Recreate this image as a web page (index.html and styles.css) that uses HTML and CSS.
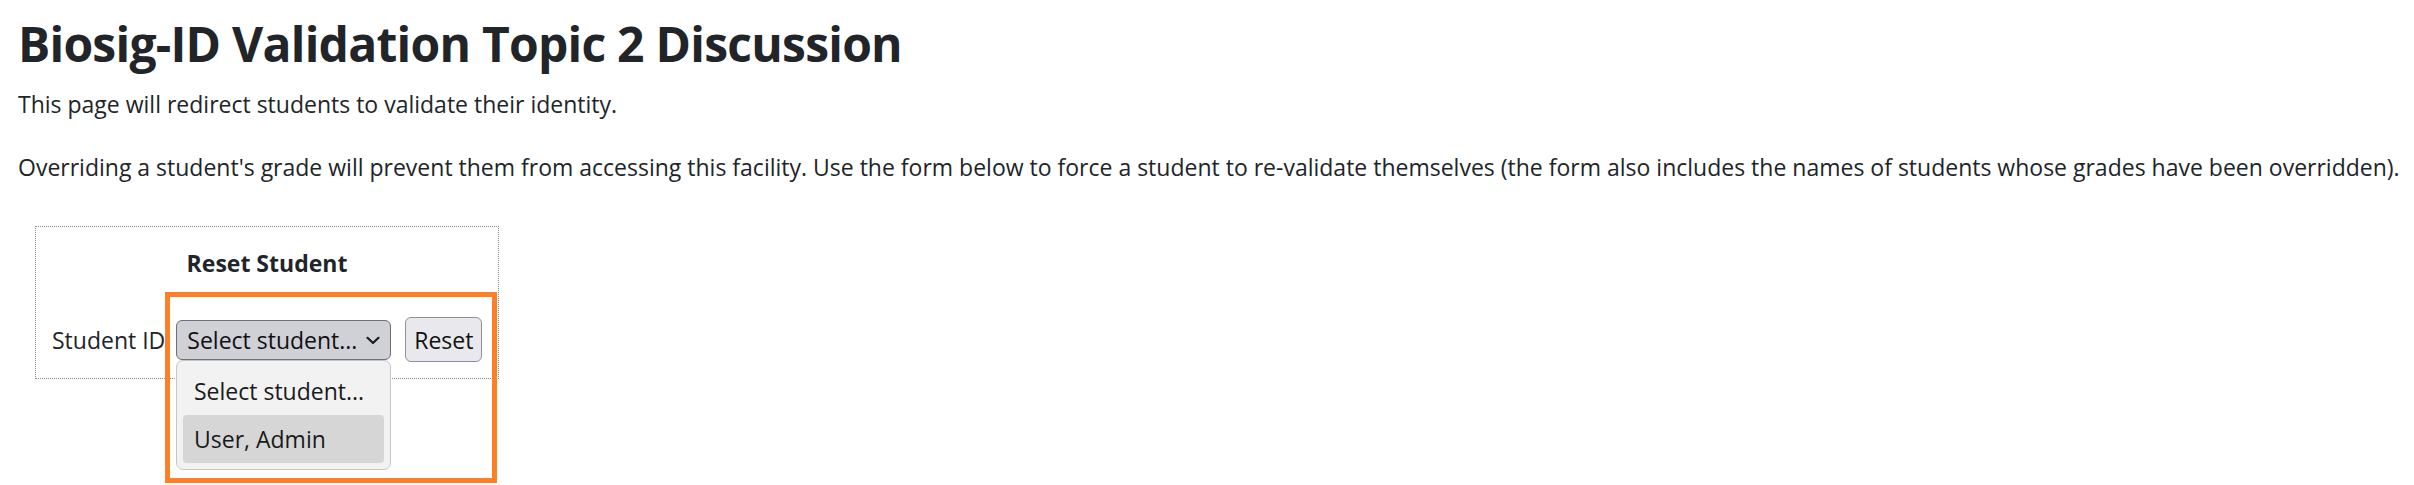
FILE: index.html
```html
<!DOCTYPE html>
<html lang="en">
<head>
  <meta charset="UTF-8" />
  <title>Biosig-ID Validation Topic 2 Discussion</title>
  <link rel="stylesheet" href="styles.css">
</head>
<body>
  <div class="page">
    <h1 class="title">Biosig-ID Validation Topic 2 Discussion</h1>
    <p class="intro">This page will redirect students to validate their identity.</p>
    <p class="intro spaced">Overriding a student's grade will prevent them from accessing this facility. Use the form below to force a student to re-validate themselves (the form also includes the names of students whose grades have been overridden).</p>

    <!-- Reset form -->
    <div class="reset-wrap">
      <div class="reset-box">
        <div class="reset-title">Reset Student</div>
        <div class="reset-row">
          <label class="reset-label">Student ID</label>
          <div class="select-box">
            <span>Select student...</span>
            <svg width="14" height="9" viewBox="0 0 14 9"><path d="M1.5 1.8 L7 7 L12.5 1.8" fill="none" stroke="#1c1c1c" stroke-width="2.2" stroke-linecap="round" stroke-linejoin="round"/></svg>
          </div>
          <button class="reset-btn">Reset</button>
        </div>
      </div>

      <!-- open dropdown -->
      <ul class="select-menu">
        <li class="menu-option">Select student...</li>
        <li class="menu-option active">User, Admin</li>
      </ul>

      <div class="highlight"></div>
    </div>
  </div>
</body>
</html>
```

FILE: styles.css
```css
html, body {
  height: 100%;
}

body {
  margin: 0;
  font-family: 'Open Sans', 'Noto Sans', sans-serif;
  font-size: 23px;
  color: #212529;
  background: #fff;
}

.page {
  min-height: 100%;
  padding: 0 8px 0 18px;
  box-sizing: border-box;
}

.title {
  font-size: 48px;
  font-weight: 700;
  line-height: 58px;
  letter-spacing: -0.75px;
  margin: 0 0 15px;
  padding-top: 15px;
}

.intro {
  line-height: 33px;
  margin: 0;
}

.intro.spaced {
  margin-top: 30px;
}

.reset-wrap {
  position: relative;
  margin: 42px 0 0 17px;
  width: 464px;
}

.reset-box {
  border: 1px dotted #8a8a8a;
  padding: 20px 16px 16px;
}

.reset-title {
  font-weight: 700;
  line-height: 33px;
  text-align: center;
  margin-bottom: 37px;
}

.reset-row {
  display: flex;
  align-items: center;
}

.reset-label {
  flex-shrink: 0;
  white-space: nowrap;
  margin-right: 11px;
}

.select-box {
  box-sizing: border-box;
  flex-shrink: 0;
  width: 215px;
  height: 40px;
  padding: 1px 10px 0;
  display: flex;
  align-items: center;
  justify-content: space-between;
  background: #d0d0d7;
  border: 1px solid #6f6f76;
  border-radius: 6px;
  color: #111;
  white-space: nowrap;
}

.reset-btn {
  box-sizing: border-box;
  flex-shrink: 0;
  width: 77px;
  height: 45px;
  margin-left: 14px;
  padding: 0;
  font-family: inherit;
  font-size: 23px;
  color: #111;
  background: #e9e9ed;
  border: 1px solid #8f8f9d;
  border-radius: 6px;
}

.select-menu {
  position: absolute;
  left: 141px;
  top: 134px;
  z-index: 1;
  box-sizing: border-box;
  width: 215px;
  margin: 0;
  padding: 6px;
  list-style: none;
  background: #f2f2f2;
  border: 1px solid #c6c6c6;
  border-radius: 7px;
  color: #1a1a1a;
}

.menu-option {
  height: 48px;
  line-height: 48px;
  padding-left: 11px;
  border-radius: 4px;
}

.menu-option.active {
  background: #d6d6d6;
}

.highlight {
  position: absolute;
  left: 130px;
  top: 66px;
  z-index: 2;
  width: 332px;
  height: 191px;
  box-sizing: border-box;
  border: 5px solid #ff7f27;
  pointer-events: none;
}
```
